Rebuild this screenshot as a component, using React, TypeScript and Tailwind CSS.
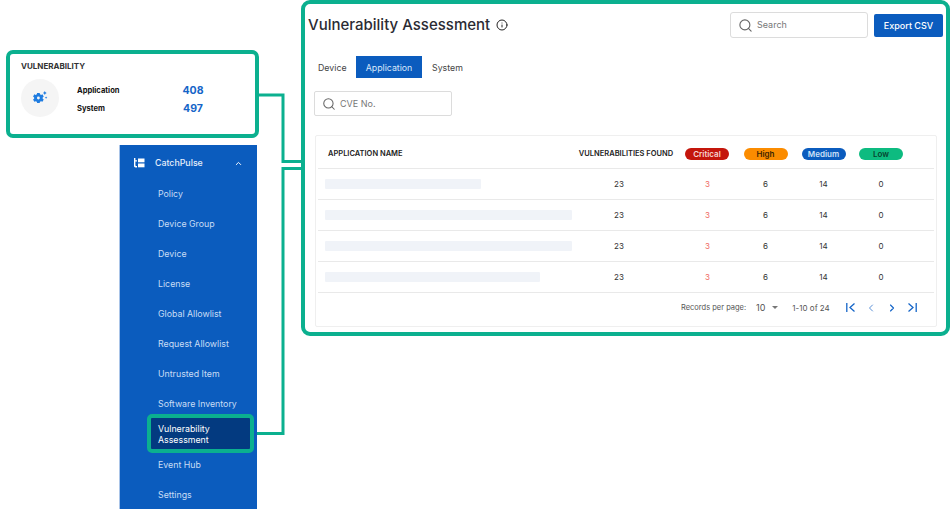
import { ChevronUp, ChevronLeft, ChevronRight, Search, Info } from "lucide-react";

const green = "#0bb08f";
const menu = ["Policy", "Device Group", "Device", "License", "Global Allowlist", "Request Allowlist", "Untrusted Item", "Software Inventory"];
const rows = [
  { w: "w-[156px]", h: "h-[31px] pb-[1px]" },
  { w: "w-[247px]", h: "h-[31px] pb-[1px]" },
  { w: "w-[247px]", h: "h-[31px]" },
  { w: "w-[215px]", h: "h-[31px]" },
];

function Pill({ label, cls }: { label: string; cls: string }) {
  return <span className={`flex h-[12px] w-[44px] items-center justify-center rounded-full text-[8px] leading-none ${cls}`}>{label}</span>;
}

function Row({ w, h }: { w: string; h: string }) {
  return (
    <div className={`grid grid-cols-[243px_116px_60px_57px_59px_56px] items-center border-b border-[#e9e9e9] text-[8px] text-[#333] ${h}`}>
      <div className={`ml-[7px] h-[10px] rounded-[1px] bg-[#f0f3f8] ${w}`} />
      <div className="text-center">23</div>
      <div className="pl-[1px] text-center text-[#ef6a63]">3</div>
      <div className="text-center">6</div>
      <div className="text-center">14</div>
      <div className="text-center">0</div>
    </div>
  );
}

function CatchPulseIcon() {
  return (
    <svg width="12" height="10" viewBox="0 0 12 10" fill="white">
      <path d="M1 0h1.4v2.2H4v1.2H2.4v3.8c0 .6.3.8.8.8H4V9.4H2.6C1.5 9.4 1 8.800 1 7.800z" />
      <rect x="5" y="0.500" width="6.500" height="3.800" />
      <rect x="5" y="5.500" width="6.500" height="3.800" />
    </svg>
  );
}

function GearIcon() {
  return (
    <svg width="16" height="14" viewBox="0 0 15 13" fill="#1f7ce0">
      <path fillRule="evenodd" d="M4.800 1.800h2.400l.3 1.300 1 .5 1.300-.5 1.200 2-1 .9v1.100l1 .9-1.200 2-1.300-.5-1 .5-.3 1.300H4.800l-.3-1.300-1-.5-1.300.5-1.200-2 1-.9V6l-1-.9 1.200-2 1.300.5 1-.5zM6 5.200a1.300 1.300 0 1 0 0 2.700 1.300 1.300 0 0 0 0-2.700z" />
      <path d="M12 0l.6 1.200 1.200.6-1.200.6L12 3.600l-.6-1.200-1.200-.6 1.200-.6zM13.200 5l.4.8.8.4-.8.4-.4.800-.4-.8-.8-.4.8-.4z" />
    </svg>
  );
}

function FirstIcon({ flip }: { flip?: boolean }) {
  return (
    <svg width="10" height="9" viewBox="0 0 10 9" fill="none" stroke="#1565c8" strokeWidth="1.300" className={flip ? "-scale-x-100" : ""}>
      <path d="M.8 0v9M8.500.5 4 4.500l4.500 4" />
    </svg>
  );
}

export default function App() {
  return (
    <div className="relative h-[509px] w-[950px] overflow-hidden bg-white font-['Inter','Liberation_Sans',sans-serif]">
      {/* annotation connectors */}
      <svg className="absolute left-0 top-0" width="950" height="509" fill="none" stroke={green} strokeWidth="3">
        <path d="M258 95h25V161.500H303" />
        <path d="M303 168.500H283V433.500H252" />
      </svg>

      {/* summary card */}
      <section className="absolute left-[6px] top-[50px] h-[88px] w-[253px] rounded-[7px] border-[4px] border-[#0bb08f] bg-white">
        <h2 className="pl-[11px] pt-[7px] text-[8px] font-bold leading-[10px] text-[#333]">VULNERABILITY</h2>
        <div className="mt-[8px] flex pl-[11px]">
          <div className="flex h-[38px] w-[38px] items-center justify-center rounded-full bg-[#f5f5f5]">
            <GearIcon />
          </div>
          <div className="ml-[18px] w-[127px] pt-[3px] text-[7.600px] font-bold leading-[18px] text-[#111]">
            <div className="flex justify-between">
              <span>Application</span>
              <span className="w-[22px] text-center text-[10.500px] font-bold text-[#1565c8]">408</span>
            </div>
            <div className="flex justify-between">
              <span>System</span>
              <span className="w-[22px] text-center text-[10.500px] font-bold text-[#1565c8]">497</span>
            </div>
          </div>
        </div>
      </section>

      {/* sidebar */}
      <nav className="absolute left-[119px] top-[145px] h-[364px] w-[138px] border-l border-[#a9c4e8] bg-[#0b5cbe] text-[8.800px] text-[#c9dcf5]">
        <div className="flex h-[36px] items-center pl-[13px] pr-[14px] text-white">
          <CatchPulseIcon />
          <span className="ml-[10px] flex-1 font-medium text-[#e6effb]">CatchPulse</span>
          <ChevronUp size={9} strokeWidth={2.500} />
        </div>
        <ul className="-mt-[2px]">
          {menu.map((m) => (
            <li key={m} className="flex h-[30px] items-center pl-[38px]">{m}</li>
          ))}
        </ul>
        <div className="relative ml-[27px] mt-[-5px] h-[39px] w-[107px] rounded-[5px] border-[4px] border-[#0bb08f] bg-[#033a80] pl-[7px] pt-[5px] leading-[11px] text-white">
          Vulnerability
          <br />
          Assessment
        </div>
        <ul>
          <li className="flex h-[24px] items-center pl-[38px]">Event Hub</li>
          <li className="flex h-[36px] items-center pl-[38px]">Settings</li>
        </ul>
      </nav>

      {/* main panel */}
      <section className="absolute left-[301px] top-0 h-[336px] w-[649px] rounded-[9px] border-[4px] border-[#0bb08f] bg-white">
        <header className="flex items-start pl-[3px] pr-[3px] pt-[8px]">
          <h1 className="text-[15px] font-medium leading-[26px] text-[#2b2b33]">Vulnerability Assessment</h1>
          <Info size={12} strokeWidth={2} className="ml-[6px] mt-[7px] text-[#222]" />
          <div className="ml-auto flex h-[26px] w-[138px] items-center rounded-[3px] border border-[#dcdcdc] pl-[7px] text-[9px] text-[#777]">
            <Search size={15} strokeWidth={1.800} className="text-[#666]" />
            <span className="ml-[4px]">Search</span>
          </div>
          <button className="ml-[6px] mt-[2px] h-[23px] w-[69px] rounded-[2px] bg-[#0b5cbe] text-[9px] font-medium text-white">Export CSV</button>
        </header>

        <div className="ml-[3px] mt-[18px] flex h-[22px] items-center text-[8.800px] text-[#444]">
          <span className="w-[48px] pl-[10px] pt-[1px]">Device</span>
          <span className="flex h-[22px] w-[66px] items-center justify-center bg-[#0b5cbe] pt-[1px] text-[#d8e7fa]">Application</span>
          <span className="pl-[10px] pt-[1px]">System</span>
        </div>

        <div className="ml-[9px] mt-[13px] flex h-[25px] w-[138px] items-center rounded-[2px] border border-[#dcdcdc] pl-[7px] text-[9px] text-[#777]">
          <Search size={14} strokeWidth={1.800} className="text-[#666]" />
          <span className="ml-[4px]">CVE No.</span>
        </div>

        <div className="ml-[10px] mt-[19px] h-[192px] w-[622px] rounded-[2px] border border-[#efefef] px-[2px]">
          <div className="grid h-[33px] grid-cols-[243px_116px_60px_57px_59px_56px] items-center border-b border-[#e9e9e9] pt-[4px] text-[7.500px] font-semibold text-[#222]">
            <div className="pl-[10px]">APPLICATION NAME</div>
            <div className="whitespace-nowrap pl-[14px] text-center">VULNERABILITIES FOUND</div>
            <div className="flex justify-center"><Pill label="Critical" cls="bg-[#c4160c] text-[#f6d5d2]" /></div>
            <div className="flex justify-center"><Pill label="High" cls="bg-[#fb8c00] text-[#3a2400]" /></div>
            <div className="flex justify-center"><Pill label="Medium" cls="bg-[#0b5cbe] text-[#cfe1f8]" /></div>
            <div className="flex justify-center"><Pill label="Low" cls="bg-[#0dbb80] text-[#07432f]" /></div>
          </div>
          {rows.map((r, i) => (
            <Row key={i} w={r.w} h={r.h} />
          ))}
          <div className="flex h-[33px] items-center pb-[4px] text-[7.500px] text-[#555]">
            <span className="ml-[363px] w-[64px] whitespace-nowrap">Records per page:</span>
            <span className="ml-[11px] text-[9px]">10</span>
            <span className="ml-[7px] h-0 w-0 border-x-[3.500px] border-t-[3.500px] border-x-transparent border-t-[#777]" />
            <span className="ml-[14px] whitespace-nowrap text-[8px]">1-10 of 24</span>
            <span className="ml-[16px] flex items-center">
              <FirstIcon />
              <ChevronLeft size={12} strokeWidth={2} className="ml-[9px] text-[#5b90d6]" />
              <ChevronRight size={12} strokeWidth={2.300} className="ml-[9px] text-[#1565c8]" />
              <span className="ml-[9px] flex"><FirstIcon flip /></span>
            </span>
          </div>
        </div>
      </section>
    </div>
  );
}
